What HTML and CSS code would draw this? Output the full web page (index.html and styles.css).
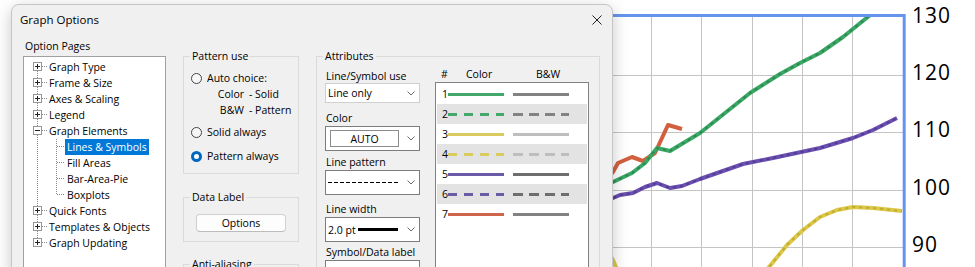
FILE: index.html
```html
<!DOCTYPE html>
<html>
<head>
    <title>Graph Options</title>
    <link rel="stylesheet" href="styles.css">
</head>
<body>
    <svg class="chart" width="975" height="267" viewBox="0 0 975 267">
        <defs>
            <clipPath id="plot"><rect x="540" y="17" width="363" height="260"></rect></clipPath>
        </defs>
        <g class="grid">
            <line x1="651.5" y1="17" x2="651.5" y2="267"></line>
            <line x1="701.5" y1="17" x2="701.5" y2="267"></line>
            <line x1="752.5" y1="17" x2="752.5" y2="267"></line>
            <line x1="802.5" y1="17" x2="802.5" y2="267"></line>
            <line x1="852.5" y1="17" x2="852.5" y2="267"></line>
            <line x1="540" y1="75.5" x2="903" y2="75.5"></line>
            <line x1="540" y1="132.5" x2="903" y2="132.5"></line>
            <line x1="540" y1="190.5" x2="903" y2="190.5"></line>
            <line x1="540" y1="247.5" x2="903" y2="247.5"></line>
        </g>
        <g clip-path="url(#plot)">
            <polyline class="s-red" points="600,185 613,172 618,163 632,157 643,161 655,153 668,125 682,129"></polyline>
            <polyline class="s-green" points="600,188 613,182 632,173 645,163 657,148 670,151 700,133 720,117 750,93 780,74 800,63 820,53 843,37 869,16 880,8"></polyline>
            <polyline class="s-green tex" points="600,188 613,182 632,173 645,163 657,148 670,151 700,133 720,117 750,93 780,74 800,63 820,53 843,37 869,16 880,8"></polyline>
            <polyline class="s-purple" points="600,201 613,198 620,195 633,193 645,187 657,183 670,188 682,186 700,179 743,164 773,158 820,148 853,138 873,130 897,118"></polyline>
            <polyline class="s-purple tex" points="600,201 613,198 620,195 633,193 645,187 657,183 670,188 682,186 700,179 743,164 773,158 820,148 853,138 873,130 897,118"></polyline>
            <polyline class="s-yellow" points="610,255 613,260 618,272"></polyline>
            <polyline class="s-yellow" points="765,272 787,245 803,230 820,217 837,210 853,207 873,208 902,211"></polyline>
            <polyline class="s-yellow tex" points="765,272 787,245 803,230 820,217 837,210 853,207 873,208 902,211"></polyline>
        </g>
        <path class="frame" d="M540 15.5 H904.2 V267"></path>
        <g class="axis">
            <text x="912" y="22.7">130</text>
            <text x="912" y="80">120</text>
            <text x="912" y="137.4">110</text>
            <text x="912" y="194.8">100</text>
            <text x="912" y="252.2">90</text>
        </g>
    </svg>

    <div class="dialog">
        <div class="titlebar">
            <span>Graph Options</span>
            <svg class="close" width="10" height="10" viewBox="0 0 10 10"><path d="M0.5 0.5 L9.5 9.5 M9.5 0.5 L0.5 9.5"></path></svg>
        </div>

        <div class="panes">
            <div class="pages">
                <div class="pages-label">Option Pages</div>
                <ul class="tree">
                    <li>
                        <svg class="gut" width="19" height="16"><line class="dots" x1="9.5" y1="8" x2="9.5" y2="16"></line><line class="dots" x1="14" y1="7.5" x2="19" y2="7.5"></line><rect x="5.5" y="3.5" width="8" height="8"></rect><path class="sign" d="M7 7.5 H12 M9.5 5 V10"></path></svg>
                        <span class="node">Graph Type</span>
                    </li>
                    <li>
                        <svg class="gut" width="19" height="16"><line class="dots" x1="9.5" y1="0" x2="9.5" y2="16"></line><line class="dots" x1="14" y1="7.5" x2="19" y2="7.5"></line><rect x="5.5" y="3.5" width="8" height="8"></rect><path class="sign" d="M7 7.5 H12 M9.5 5 V10"></path></svg>
                        <span class="node">Frame &amp; Size</span>
                    </li>
                    <li>
                        <svg class="gut" width="19" height="16"><line class="dots" x1="9.5" y1="0" x2="9.5" y2="16"></line><line class="dots" x1="14" y1="7.5" x2="19" y2="7.5"></line><rect x="5.5" y="3.5" width="8" height="8"></rect><path class="sign" d="M7 7.5 H12 M9.5 5 V10"></path></svg>
                        <span class="node">Axes &amp; Scaling</span>
                    </li>
                    <li>
                        <svg class="gut" width="19" height="16"><line class="dots" x1="9.5" y1="0" x2="9.5" y2="16"></line><line class="dots" x1="14" y1="7.5" x2="19" y2="7.5"></line><rect x="5.5" y="3.5" width="8" height="8"></rect><path class="sign" d="M7 7.5 H12 M9.5 5 V10"></path></svg>
                        <span class="node">Legend</span>
                    </li>
                    <li>
                        <svg class="gut" width="19" height="16"><line class="dots" x1="9.5" y1="0" x2="9.5" y2="16"></line><line class="dots" x1="14" y1="7.5" x2="19" y2="7.5"></line><rect x="5.5" y="3.5" width="8" height="8"></rect><path class="sign" d="M7 7.5 H12"></path></svg>
                        <span class="node">Graph Elements</span>
                    </li>
                    <li>
                        <svg class="gut" width="19" height="16"><line class="dots" x1="9.5" y1="0" x2="9.5" y2="16"></line></svg>
                        <svg class="gut sub" width="18" height="16"><line class="dots" x1="9.5" y1="0" x2="9.5" y2="16"></line><line class="dots" x1="10" y1="7.5" x2="18" y2="7.5"></line></svg>
                        <span class="node selected">Lines &amp; Symbols</span>
                    </li>
                    <li>
                        <svg class="gut" width="19" height="16"><line class="dots" x1="9.5" y1="0" x2="9.5" y2="16"></line></svg>
                        <svg class="gut sub" width="18" height="16"><line class="dots" x1="9.5" y1="0" x2="9.5" y2="16"></line><line class="dots" x1="10" y1="7.5" x2="18" y2="7.5"></line></svg>
                        <span class="node">Fill Areas</span>
                    </li>
                    <li>
                        <svg class="gut" width="19" height="16"><line class="dots" x1="9.5" y1="0" x2="9.5" y2="16"></line></svg>
                        <svg class="gut sub" width="18" height="16"><line class="dots" x1="9.5" y1="0" x2="9.5" y2="16"></line><line class="dots" x1="10" y1="7.5" x2="18" y2="7.5"></line></svg>
                        <span class="node">Bar-Area-Pie</span>
                    </li>
                    <li>
                        <svg class="gut" width="19" height="16"><line class="dots" x1="9.5" y1="0" x2="9.5" y2="16"></line></svg>
                        <svg class="gut sub" width="18" height="16"><line class="dots" x1="9.5" y1="0" x2="9.5" y2="8"></line><line class="dots" x1="10" y1="7.5" x2="18" y2="7.5"></line></svg>
                        <span class="node">Boxplots</span>
                    </li>
                    <li>
                        <svg class="gut" width="19" height="16"><line class="dots" x1="9.5" y1="0" x2="9.5" y2="16"></line><line class="dots" x1="14" y1="7.5" x2="19" y2="7.5"></line><rect x="5.5" y="3.5" width="8" height="8"></rect><path class="sign" d="M7 7.5 H12 M9.5 5 V10"></path></svg>
                        <span class="node">Quick Fonts</span>
                    </li>
                    <li>
                        <svg class="gut" width="19" height="16"><line class="dots" x1="9.5" y1="0" x2="9.5" y2="16"></line><line class="dots" x1="14" y1="7.5" x2="19" y2="7.5"></line><rect x="5.5" y="3.5" width="8" height="8"></rect><path class="sign" d="M7 7.5 H12 M9.5 5 V10"></path></svg>
                        <span class="node">Templates &amp; Objects</span>
                    </li>
                    <li>
                        <svg class="gut" width="19" height="16"><line class="dots" x1="9.5" y1="0" x2="9.5" y2="8"></line><line class="dots" x1="14" y1="7.5" x2="19" y2="7.5"></line><rect x="5.5" y="3.5" width="8" height="8"></rect><path class="sign" d="M7 7.5 H12 M9.5 5 V10"></path></svg>
                        <span class="node">Graph Updating</span>
                    </li>
                </ul>
            </div>

            <div class="middle">
                <fieldset class="group pattern">
                    <legend>Pattern use</legend>
                    <div class="radio first"><span class="dot"></span>Auto choice:</div>
                    <div class="auto-note">
                        <span class="k">Color</span><span>- Solid</span>
                        <span class="k">B&amp;W</span><span>- Pattern</span>
                    </div>
                    <div class="radio solid"><span class="dot"></span>Solid always</div>
                    <div class="radio on"><span class="dot"></span>Pattern always</div>
                </fieldset>

                <fieldset class="group data-label">
                    <legend>Data Label</legend>
                    <div class="button">Options</div>
                </fieldset>

                <fieldset class="group anti">
                    <legend>Anti-aliasing</legend>
                </fieldset>
            </div>

            <fieldset class="group attributes">
                <legend>Attributes</legend>
                <div class="attr-body">
                    <div class="controls">
                        <div class="ctl-label">Line/Symbol use</div>
                        <div class="select">
                            <span class="value">Line only</span>
                            <svg class="chev" width="8" height="5" viewBox="0 0 8 5"><polyline points="0.5,0.5 4,4 7.5,0.5"></polyline></svg>
                        </div>

                        <div class="ctl-label color-label">Color</div>
                        <div class="combo color-combo">
                            <span class="value"><span class="auto">AUTO</span></span>
                            <svg class="chev" width="8" height="5" viewBox="0 0 8 5"><polyline points="0.5,0.5 4,4 7.5,0.5"></polyline></svg>
                        </div>

                        <div class="ctl-label pattern-label">Line pattern</div>
                        <div class="combo pattern-combo">
                            <span class="value"><span class="dash-sample"></span></span>
                            <svg class="chev" width="8" height="5" viewBox="0 0 8 5"><polyline points="0.5,0.5 4,4 7.5,0.5"></polyline></svg>
                        </div>

                        <div class="ctl-label width-label">Line width</div>
                        <div class="combo width-combo">
                            <span class="value">2.0 pt<span class="width-sample"></span></span>
                            <svg class="chev" width="8" height="5" viewBox="0 0 8 5"><polyline points="0.5,0.5 4,4 7.5,0.5"></polyline></svg>
                        </div>

                        <div class="ctl-label symbol-label">Symbol/Data label</div>
                        <div class="combo symbol-combo"></div>
                    </div>

                    <div class="lines">
                        <div class="lines-head">
                            <span class="h-num">#</span>
                            <span class="h-color">Color</span>
                            <span class="h-bw">B&amp;W</span>
                        </div>
                        <div class="line-list">
                            <div class="row"><span class="num">1</span><span class="sw green"></span><span class="sw gray"></span></div>
                            <div class="row shade"><span class="num">2</span><span class="sw green dash"></span><span class="sw gray dash"></span></div>
                            <div class="row"><span class="num">3</span><span class="sw yellow"></span><span class="sw light"></span></div>
                            <div class="row shade"><span class="num">4</span><span class="sw yellow dash"></span><span class="sw light dash"></span></div>
                            <div class="row"><span class="num">5</span><span class="sw purple"></span><span class="sw dark"></span></div>
                            <div class="row shade"><span class="num">6</span><span class="sw purple dash"></span><span class="sw dark dash"></span></div>
                            <div class="row"><span class="num">7</span><span class="sw red"></span><span class="sw gray"></span></div>
                        </div>
                    </div>
                </div>
            </fieldset>
        </div>
    </div>
</body>
</html>
```

FILE: styles.css
```css
* {
    box-sizing: border-box;
}
body {
    margin: 0;
    width: 975px;
    height: 267px;
    overflow: hidden;
    position: relative;
    background-color: #fff;
    font-family: "Open Sans", "Noto Sans", sans-serif;
    font-size: 10.5px;
    color: #000;
}

/* chart behind the dialog */
.chart {
    display: block;
}
.chart .grid line {
    stroke: #c4c4c4;
    stroke-width: 1;
}
.chart polyline {
    fill: none;
    stroke-width: 4;
    stroke-linejoin: round;
}
.s-green {
    stroke: #3aa865;
}
.s-red {
    stroke: #d2603f;
}
.s-purple {
    stroke: #6a4fb0;
}
.s-yellow {
    stroke: #dcc746;
}
/* the patterned series have a faint darker dash on top */
.chart polyline.tex {
    stroke-width: 2;
    stroke-dasharray: 3 4;
    opacity: 0.35;
    stroke: #1e4a2e;
}
.chart polyline.s-purple.tex {
    stroke: #2a1a60;
}
.chart polyline.s-yellow.tex {
    stroke: #8a7a10;
}
.frame {
    fill: none;
    stroke: #6494ec;
    stroke-width: 3;
}
.axis text {
    font-family: "Open Sans", sans-serif;
    font-size: 21px;
    letter-spacing: 1px;
    fill: #000;
}

/* the dialog window */
.dialog {
    position: absolute;
    left: 11px;
    top: 4px;
    width: 602px;
    height: 300px;
    background-color: #f0f0f0;
    border: 1px solid #c6c6c6;
    border-radius: 8px;
    box-shadow: 0 4px 16px rgba(0, 0, 0, 0.22);
}
.titlebar {
    height: 29px;
    display: flex;
    align-items: center;
    justify-content: space-between;
    padding: 0 10px 0 8px;
    font-size: 11.5px;
}
.close path {
    stroke: #222;
    stroke-width: 1;
    fill: none;
}
.panes {
    display: grid;
    grid-template-columns: 143px 116px 284px;
    column-gap: 17px;
    align-items: start;
    padding-left: 11px;
}

/* option pages tree */
.pages-label {
    line-height: 14px;
    margin-top: 5px;
    margin-bottom: 3px;
    padding-left: 2px;
}
.tree {
    list-style: none;
    margin: 0;
    padding: 2px 0 0 4px;
    height: 230px;
    background-color: #fff;
    border: 1px solid #a0a0a0;
}
.tree li {
    display: flex;
    align-items: center;
    height: 16px;
}
.gut {
    display: block;
    flex: none;
}
.gut .dots {
    stroke: #8a8a8a;
    stroke-width: 1;
    stroke-dasharray: 1 1;
    shape-rendering: crispEdges;
}
.gut rect {
    fill: #fff;
    stroke: #969696;
    stroke-width: 1;
    shape-rendering: crispEdges;
}
.gut .sign {
    stroke: #222;
    stroke-width: 1;
    shape-rendering: crispEdges;
}
.node {
    line-height: 16px;
    padding: 0 2px;
    white-space: nowrap;
}
.node.selected {
    background-color: #0078d7;
    color: #fff;
}

/* group boxes */
.group {
    margin: 0;
    padding: 0 6px;
    min-width: 0;
    border: 1px solid #dadada;
}
.group legend {
    padding: 0 2px;
    line-height: 14px;
}
.middle {
    display: flex;
    flex-direction: column;
}
.pattern {
    margin-top: 15px;
    padding-top: 7px;
    padding-bottom: 9px;
}
.radio {
    display: flex;
    align-items: center;
    height: 16px;
}
.radio .dot {
    width: 11px;
    height: 11px;
    margin-right: 5px;
    margin-left: 1px;
    border-radius: 50%;
    border: 1px solid #444;
    background-color: #f7f7f7;
}
.radio.on .dot {
    border: 3.5px solid #0067c0;
    background-color: #fff;
}
.radio.solid {
    margin-top: 6px;
}
.radio.on {
    margin-top: 8px;
}
.auto-note {
    display: grid;
    grid-template-columns: 54px auto;
    column-gap: 5px;
    line-height: 16px;
}
.auto-note .k {
    text-align: right;
}
.data-label {
    margin-top: 16px;
    padding-top: 10px;
    padding-bottom: 9px;
}
.button {
    width: 90px;
    height: 18px;
    margin: 0 auto;
    display: flex;
    align-items: center;
    justify-content: center;
    background-color: #fdfdfd;
    border: 1px solid #d0d0d0;
    border-bottom-color: #bcbcbc;
    border-radius: 4px;
}
.anti {
    margin-top: 15px;
    height: 40px;
}

/* attributes */
.attributes {
    margin-top: 15px;
    padding: 0 10px 0 8px;
    height: 260px;
}
.attributes legend {
    margin-left: -2px;
}
.attr-body {
    display: flex;
    gap: 15px;
}
.controls {
    width: 95px;
    flex: none;
}
.ctl-label {
    line-height: 14px;
    margin-top: 6px;
    padding-left: 1px;
}
.color-label {
    margin-top: 8px;
}
.pattern-label {
    margin-top: 4px;
}
.width-label {
    margin-top: 7px;
}
.symbol-label {
    margin-top: 3px;
}
.select,
.combo {
    display: flex;
    align-items: center;
    background-color: #fff;
    padding: 0 4px 0 2px;
}
.select {
    height: 20px;
    border: 1px solid #cfcfcf;
}
.combo {
    height: 25px;
    border: 1px solid #7d7d7d;
    margin-top: 1px;
}
.value {
    flex: 1;
    display: flex;
    align-items: center;
}
.chev polyline {
    fill: none;
    stroke: #6a6a6a;
    stroke-width: 1;
}
.auto {
    width: 69px;
    height: 17px;
    margin-left: 2px;
    display: flex;
    align-items: center;
    justify-content: center;
    border: 1px solid #8c8c8c;
}
.dash-sample {
    width: 71px;
    height: 1px;
    background-image: repeating-linear-gradient(to right, #000 0 4px, transparent 4px 6px);
}
.width-sample {
    width: 40px;
    height: 3px;
    margin-left: 2px;
    background-color: #000;
}
.symbol-combo {
    height: 20px;
}

/* line list */
.lines {
    width: 154px;
    flex: none;
    padding-top: 4px;
}
.lines-head {
    display: flex;
    line-height: 14px;
    margin-bottom: 1px;
    padding-left: 6px;
}
.h-num {
    width: 25px;
}
.h-color {
    width: 70px;
}
.line-list {
    height: 190px;
    padding: 1px;
    background-color: #fff;
    border: 1px solid #828282;
}
.row {
    display: flex;
    align-items: center;
    height: 20px;
    padding-left: 5px;
}
.row.shade {
    background-color: #e3e3e3;
}
.num {
    width: 6px;
    line-height: 14px;
}
.sw {
    width: 56px;
    height: 3px;
}
.sw + .sw {
    margin-left: 9px;
}
.green {
    background-color: #44a86c;
}
.yellow {
    background-color: #dacb5e;
}
.purple {
    background-color: #6b5ba6;
}
.red {
    background-color: #cf654b;
}
.gray {
    background-color: #828282;
}
.light {
    background-color: #bebebe;
}
.dark {
    background-color: #6e6e6e;
}
.green.dash {
    background: repeating-linear-gradient(to right, #44a86c 0 9px, transparent 9px 16px);
}
.yellow.dash {
    background: repeating-linear-gradient(to right, #dacb5e 0 9px, transparent 9px 16px);
}
.purple.dash {
    background: repeating-linear-gradient(to right, #6b5ba6 0 9px, transparent 9px 16px);
}
.gray.dash {
    background: repeating-linear-gradient(to right, #828282 0 10px, transparent 10px 16px);
}
.light.dash {
    background: repeating-linear-gradient(to right, #bebebe 0 10px, transparent 10px 16px);
}
.dark.dash {
    background: repeating-linear-gradient(to right, #6e6e6e 0 10px, transparent 10px 16px);
}
```
